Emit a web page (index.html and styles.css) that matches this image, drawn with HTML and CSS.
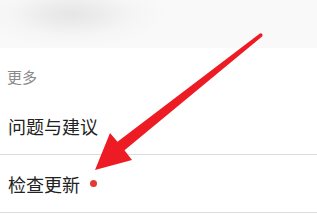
FILE: index.html
```html
<!DOCTYPE html>
<html lang="zh-CN">
<head>
<meta charset="utf-8">
<link rel="stylesheet" href="styles.css">
</head>
<body>
<div class="page">
  <div class="header"></div>
  <div class="section-label">更多</div>
  <div class="item"><span class="item-text">问题与建议</span></div>
  <div class="item"><span class="item-text">检查更新</span><span class="dot"></span></div>
  <svg class="arrow" width="317" height="219" viewBox="0 0 317 219">
    <path d="M259.9,33.6 L117.5,141.7 L110,133 L95,170 L132,160 L124.5,150.3 L262.1,36.4 A1.8 1.8 0 0 0 259.9,33.6 Z" fill="#ed1c24"/>
  </svg>
</div>
</body>
</html>
```
FILE: styles.css
```css
html, body {
  margin: 0;
  padding: 0;
  background: #ffffff;
}
.page {
  position: relative;
  width: 317px;
  height: 219px;
  overflow: hidden;
  font-family: "Noto Sans CJK SC", "Noto Sans", sans-serif;
}
.header {
  height: 48px;
  background:
    radial-gradient(ellipse 95px 34px at 72px 14px, #e6e6e6 0%, #ececec 30%, rgba(244,244,244,0.7) 65%, rgba(249,249,249,0) 100%),
    #f9f9f9;
}
.section-label {
  height: 49px;
  box-sizing: border-box;
  padding: 21px 0 0 7px;
  font-size: 15px;
  line-height: 16px;
  color: #8a8a8a;
}
.item {
  height: 58px;
  box-sizing: border-box;
  display: flex;
  align-items: center;
  padding-left: 8px;
  border-bottom: 1px solid #dcdcdc;
}
.item-text {
  font-size: 18px;
  color: #222222;
}
.dot {
  width: 7px;
  height: 7px;
  border-radius: 50%;
  background: #e53935;
  margin-left: 10px;
}
.arrow {
  position: absolute;
  left: 0;
  top: 0;
}
```
